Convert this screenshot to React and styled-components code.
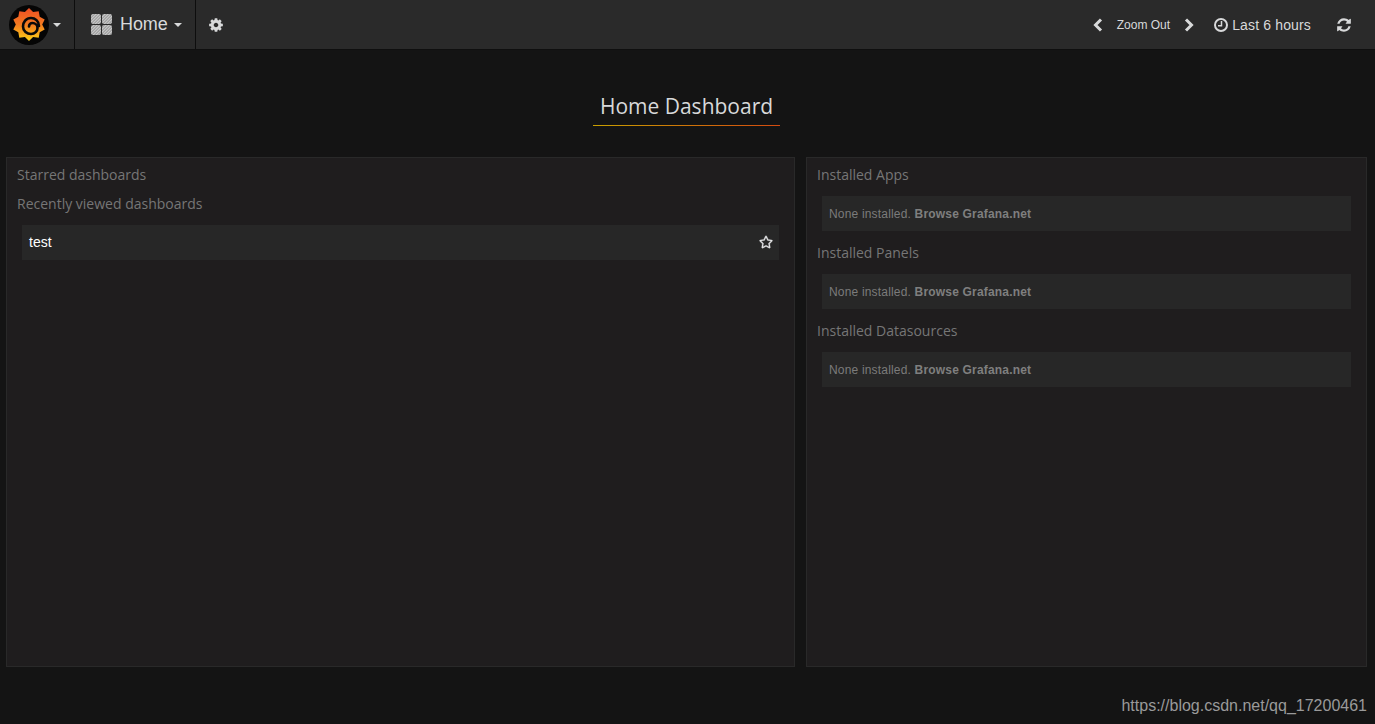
import React from "react";
import styled, { createGlobalStyle } from "styled-components";
import { FaRegStar } from "react-icons/fa";

const GlobalStyle = createGlobalStyle`
  html, body {
    margin: 0;
    height: 100%;
    background: #141414;
  }
  body {
    font-family: "Liberation Sans", Arial, sans-serif;
    overflow: hidden;
  }
`;

const Page = styled.div`
  position: relative;
  height: 724px;
  background: #141414;
`;

const Navbar = styled.nav`
  display: flex;
  align-items: stretch;
  height: 49px;
  background: #2a2a2a;
  border-bottom: 1px solid #0f0f0f;
  color: #d8d9da;
`;

const NavSection = styled.div`
  display: flex;
  align-items: center;
  border-right: 1px solid #0d0d0d;
  width: ${(p) => p.$width}px;
  padding-left: ${(p) => p.$pad || 0}px;
  box-sizing: border-box;
`;

const Caret = styled.span`
  width: 0;
  height: 0;
  margin-left: ${(p) => p.$gap}px;
  border-left: 4px solid transparent;
  border-right: 4px solid transparent;
  border-top: 4px solid #d8d9da;
`;

const HomeLabel = styled.span`
  font-size: 18px;
  margin-left: 8px;
  letter-spacing: -0.1px;
`;

const GearButton = styled.div`
  display: flex;
  align-items: center;
  padding-left: 12px;
`;

const NavRight = styled.div`
  display: flex;
  align-items: center;
  margin-left: auto;
  padding-right: 23px;
`;

const ZoomLabel = styled.span`
  font-size: 12px;
  margin: 0 14px;
`;

const ClockIcon = styled.svg`
  margin-left: 20px;
`;

const TimeLabel = styled.span`
  font-size: 14px;
  letter-spacing: 0.15px;
  margin-left: 4px;
  margin-right: 25px;
`;

const Title = styled.div`
  display: flex;
  justify-content: center;
  padding-top: 44px;
  height: 63px;
`;

const TitleText = styled.h1`
  margin: 0 2px 0 0;
  height: 31px;
  width: 187px;
  text-align: center;
  font-family: "Open Sans", sans-serif;
  font-size: 21px;
  font-weight: 400;
  line-height: 24px;
  color: #d8d9da;
  border-bottom: 1px solid;
  border-image: linear-gradient(90deg, #c8a000, #d44a10) 1;
`;

const Columns = styled.div`
  display: grid;
  grid-template-columns: 789px 561px;
  column-gap: 11px;
  padding-left: 6px;
`;

const Panel = styled.section`
  box-sizing: border-box;
  height: 510px;
  padding: 6px 15px 0 10px;
  background: #1f1d1e;
  border: 1px solid #292929;
`;

const SectionTitle = styled.h6`
  margin: 0;
  height: 29px;
  font-family: "Open Sans", sans-serif;
  font-size: 14px;
  font-weight: 400;
  line-height: 22px;
  color: #767676;
`;

const Row = styled.div`
  display: flex;
  align-items: center;
  justify-content: space-between;
  box-sizing: border-box;
  height: 35px;
  margin: 3px 0 11px 5px;
  padding: 0 6px ${(p) => (p.$raised ? 2 : 0)}px 7px;
  background: #272727;
`;

const RowLink = styled.span`
  font-size: 14px;
  color: #fff;
`;

const StarIcon = styled(FaRegStar)`
  font-size: 14px;
  color: #e3e4e5;
  stroke: currentColor;
  stroke-width: 12px;
`;

const EmptyNote = styled.span`
  font-size: 12px;
  letter-spacing: 0.18px;
  color: #7b7b7b;
`;

const BrowseLink = styled.b`
  color: #7f7f7f;
`;

const Watermark = styled.div`
  position: absolute;
  right: 8px;
  bottom: 9px;
  font-size: 16px;
  color: #9a9a9a;
`;

// grafana gear outline, computed once
const gearPoints = Array.from({ length: 20 }, (_, i) => {
  const a = (i / 20) * Math.PI * 2 - Math.PI / 2;
  const r = i % 2 === 0 ? 16.5 : 13.2;
  return `${(20 + r * Math.cos(a)).toFixed(1)},${(19.5 + r * Math.sin(a)).toFixed(1)}`;
}).join(" ");

function GrafanaLogo() {
  return (
    <svg width="40" height="40" viewBox="0 0 40 40">
      <defs>
        <linearGradient id="flame" x1="0" y1="0" x2="0" y2="1">
          <stop offset="0" stopColor="#ee4d24" />
          <stop offset="0.5" stopColor="#f37b20" />
          <stop offset="1" stopColor="#fcd116" />
        </linearGradient>
      </defs>
      <circle cx="20" cy="20" r="20" fill="#050505" />
      <polygon points={gearPoints} fill="url(#flame)" />
      <path
        d="M30 21C30 16 26 13 22 13C17 13 14 17 14 21.500C14 26 18 29 22 29C26 29 28.500 26 28.500 23C28.500 20 26 18 23.500 18C21.500 18 20 19.500 20 21.500"
        fill="none"
        stroke="#0a0a0a"
        strokeWidth="2.6"
        strokeLinecap="round"
      />
    </svg>
  );
}

function DashboardIcon() {
  return (
    <svg width="21" height="21" viewBox="0 0 21 21">
      <defs>
        <pattern id="hatch" width="2.12" height="2.12" patternUnits="userSpaceOnUse" patternTransform="rotate(45)">
          <rect width="2.12" height="2.12" fill="#d4d4d4" />
          <rect width="1" height="2.12" fill="#8c8c8c" />
        </pattern>
      </defs>
      <rect x="0" y="0" width="10" height="10" rx="2" fill="url(#hatch)" />
      <rect x="11" y="0" width="10" height="10" rx="2" fill="url(#hatch)" />
      <rect x="0" y="11" width="10" height="10" rx="2" fill="url(#hatch)" />
      <rect x="11" y="11" width="10" height="10" rx="2" fill="url(#hatch)" />
    </svg>
  );
}

function CogIcon() {
  return (
    <svg width="16" height="16" viewBox="0 0 1792 1792" fill="currentColor">
      <path d="M1152 896q0-106-75-181t-181-75-181 75-75 181 75 181 181 75 181-75 75-181zm512-109v222q0 12-8 23t-20 13l-185 28q-19 54-39 91 35 50 107 138 10 12 10 25t-9 23q-27 37-99 108t-94 71q-12 0-26-9l-138-108q-44 23-91 38-16 136-29 186-7 28-36 28h-222q-14 0-24.500-8.500t-11.500-21.500l-28-184q-49-16-90-37l-141 107q-10 9-25 9-14 0-25-11-126-114-165-168-7-10-7-23 0-12 8-23 15-21 51-66.500t54-70.500q-27-50-41-99l-183-27q-13-2-21-12.500t-8-23.500v-222q0-12 8-23t19-13l186-28q14-46 39-92-40-57-107-138-10-12-10-24 0-10 9-23 26-36 98.500-107.500t94.500-71.500q13 0 26 10l138 107q44-23 91-38 16-136 29-186 7-28 36-28h222q14 0 24.500 8.500t11.500 21.500l28 184q49 16 90 37l142-107q9-9 24-9 13 0 25 10 129 119 165 170 7 8 7 22 0 12-8 23-15 21-51 66.500t-54 70.500q26 50 41 98l183 28q13 2 21 12.500t8 23.500z" />
    </svg>
  );
}

function RefreshIcon() {
  return (
    <svg width="16" height="16" viewBox="0 0 1792 1792" fill="currentColor">
      <path d="M1639 1056q0 5-1 7-64 268-268 434.500t-478 166.500q-146 0-282.500-55t-243.500-157l-129 129q-19 19-45 19t-45-19-19-45v-448q0-26 19-45t45-19h448q26 0 45 19t19 45-19 45l-137 137q71 66 161 102t187 36q134 0 250-65t186-179q11-17 53-117 8-23 30-23h192q13 0 22.500 9.500t9.500 22.500zm25-800v448q0 26-19 45t-45 19h-448q-26 0-45-19t-19-45 19-45l138-138q-148-137-349-137-134 0-250 65t-186 179q-11 17-53 117-8 23-30 23h-199q-13 0-22.500-9.500t-9.500-22.500v-7q65-268 270-434.500t480-166.500q146 0 284 55.500t245 156.500l130-129q19-19 45-19t45 19 19 45z" />
    </svg>
  );
}

function Chevron({ flip }) {
  return (
    <svg width="10" height="14" viewBox="0 0 10 14">
      <polyline
        points={flip ? "2,1.500 7.500,7 2,12.500" : "8,1.500 2.500,7 8,12.500"}
        fill="none"
        stroke="currentColor"
        strokeWidth="3"
      />
    </svg>
  );
}

function NotInstalled() {
  return (
    <Row>
      <EmptyNote>
        None installed. <BrowseLink>Browse Grafana.net</BrowseLink>
      </EmptyNote>
    </Row>
  );
}

export default function App() {
  return (
    <Page>
      <GlobalStyle />
      <Navbar>
        <NavSection $width={75} $pad={9}>
          <GrafanaLogo />
          <Caret $gap={4} />
        </NavSection>
        <NavSection $width={121} $pad={16}>
          <DashboardIcon />
          <HomeLabel>Home</HomeLabel>
          <Caret $gap={6} />
        </NavSection>
        <GearButton>
          <CogIcon />
        </GearButton>
        <NavRight>
          <Chevron />
          <ZoomLabel>Zoom Out</ZoomLabel>
          <Chevron flip />
          <ClockIcon width="14" height="14" viewBox="0 0 14 14">
            <circle cx="7" cy="7" r="6" fill="none" stroke="currentColor" strokeWidth="2" />
            <polyline points="7.500,3 7.500,7.800 4,7.800" fill="none" stroke="currentColor" strokeWidth="1.500" />
          </ClockIcon>
          <TimeLabel>Last 6 hours</TimeLabel>
          <RefreshIcon />
        </NavRight>
      </Navbar>
      <Title>
        <TitleText>Home Dashboard</TitleText>
      </Title>
      <Columns>
        <Panel>
          <SectionTitle>Starred dashboards</SectionTitle>
          <SectionTitle>Recently viewed dashboards</SectionTitle>
          <Row $raised>
            <RowLink>test</RowLink>
            <StarIcon />
          </Row>
        </Panel>
        <Panel>
          <SectionTitle>Installed Apps</SectionTitle>
          <NotInstalled />
          <SectionTitle>Installed Panels</SectionTitle>
          <NotInstalled />
          <SectionTitle>Installed Datasources</SectionTitle>
          <NotInstalled />
        </Panel>
      </Columns>
      <Watermark>https://blog.csdn.net/qq_17200461</Watermark>
    </Page>
  );
}
